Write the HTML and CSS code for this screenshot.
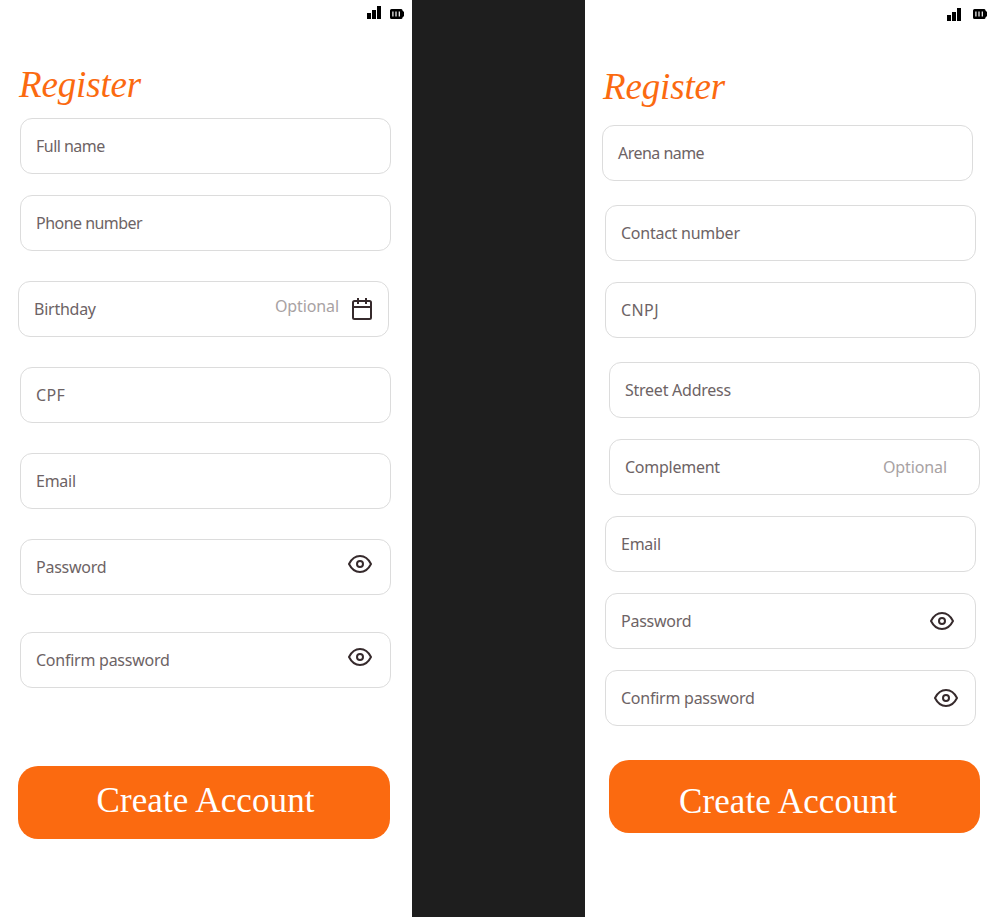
FILE: index.html
```html
<!DOCTYPE html>
<html lang="en">
<head>
<meta charset="utf-8">
<title>Register</title>
<link rel="stylesheet" href="styles.css">
</head>
<body>
<svg class="sprite" aria-hidden="true">
  <symbol id="signal" viewBox="0 0 14 13"><path d="M0 7h4v6H0zM5 4h4v9H5zM10 0h4v13h-4z"/></symbol>
  <symbol id="battery" viewBox="0 0 14 10"><path fill-rule="evenodd" d="M1.500 0h9.700Q12.500 0 12.500 1.500L14 3v4l-1.500 1.500Q12.500 10 11 10H1.500Q0 10 0 8.500v-7Q0 0 1.500 0zM2.300 2.500v5h1.200v-5zM5.400 2.500v5h1.200v-5zM8.700 2.500v5h1.200v-5z"/></symbol>
  <symbol id="eye" viewBox="0 0 24 20"><g fill="none" stroke="#362A2C" stroke-width="2" stroke-linejoin="round"><path d="M1 10C3.500 5 7.500 2 12 2s8.500 3 11 8c-2.500 5-6.500 8-11 8S3.500 15 1 10z"/><circle cx="12" cy="10" r="3"/></g></symbol>
  <symbol id="calendar" viewBox="0 0 22 24"><g fill="none" stroke="#362A2C" stroke-width="2"><rect x="2" y="4" width="18" height="18" rx="1.500"/><path d="M2 10h18M7 1v6M15 1v6"/></g></symbol>
</svg>
<main class="board">
  <section class="screen player">
    <div class="status"><svg class="signal"><use href="#signal"/></svg><svg class="battery"><use href="#battery"/></svg></div>
    <h1>Register</h1>
    <form>
      <div class="field name"><label>Full name</label></div>
      <div class="field phone"><label>Phone number</label></div>
      <div class="field birthday"><label>Birthday</label><span class="optional">Optional</span><svg class="calendar"><use href="#calendar"/></svg></div>
      <div class="field spaced code"><label>CPF</label></div>
      <div class="field spaced"><label>Email</label></div>
      <div class="field spaced"><label>Password</label><svg class="eye"><use href="#eye"/></svg></div>
      <div class="field confirm"><label>Confirm password</label><svg class="eye"><use href="#eye"/></svg></div>
      <button type="button">Create Account</button>
    </form>
  </section>
  <section class="screen arena">
    <div class="status"><svg class="signal"><use href="#signal"/></svg><svg class="battery"><use href="#battery"/></svg></div>
    <h1>Register</h1>
    <form>
      <div class="field name arena-name"><label>Arena name</label></div>
      <div class="field contact"><label>Contact number</label></div>
      <div class="field code"><label>CNPJ</label></div>
      <div class="field street"><label>Street Address</label></div>
      <div class="field complement"><label>Complement</label><span class="optional">Optional</span></div>
      <div class="field"><label>Email</label></div>
      <div class="field"><label>Password</label><svg class="eye"><use href="#eye"/></svg></div>
      <div class="field confirm"><label>Confirm password</label><svg class="eye"><use href="#eye"/></svg></div>
      <button type="button">Create Account</button>
    </form>
  </section>
</main>
</body>
</html>
```
FILE: styles.css
```css
* { box-sizing: border-box; }
body { margin: 0; background: #1e1e1e; font-family: "Noto Sans", sans-serif; }
.sprite { display: none; }
svg { display: block; flex: none; }
.board { display: flex; justify-content: space-between; width: 997px; height: 917px; overflow: hidden; }
.screen { width: 412px; height: 917px; background: #fff; }

.status { display: flex; justify-content: flex-end; align-items: center; gap: 9px; height: 26px; padding-right: 8px; }
.signal { width: 14px; height: 13px; margin-bottom: 1px; }
.battery { width: 14px; height: 10px; margin-top: 2px; }
.arena .status { height: 28px; gap: 12px; padding-right: 10px; }
.arena .signal { margin-bottom: 0; }
.arena .battery { margin-top: 0; }

h1 { margin: 37px 0 0 19px; height: 55px; font: italic 400 37px/44px "Liberation Serif", serif; letter-spacing: -0.15px; color: #fb6a10; }
.arena h1 { margin-left: 18px; height: 60px; }

form { display: flex; flex-direction: column; }
.field { display: flex; align-items: center; width: 371px; height: 56px; margin-left: 20px; padding: 0 15px; border: 1px solid #dcdcdc; border-radius: 12px; }
label { font-size: 16px; line-height: 24px; letter-spacing: -0.25px; color: #6d6365; }
.name label, .phone label { letter-spacing: -0.53px; }
.code label { letter-spacing: 0.4px; }
.optional { font-size: 16px; line-height: 24px; letter-spacing: -0.1px; margin-left: auto; color: #a8a2a3; }
.eye { width: 24px; height: 20px; margin: 0 3px 7px auto; }
.calendar { width: 22px; height: 24px; margin-left: 12px; }

.player .phone { margin-top: 21px; }
.player .birthday { margin: 30px 0 0 18px; }
.birthday .optional { margin-bottom: 6px; }
.player .spaced { margin-top: 30px; }
.player .confirm { margin-top: 37px; }

.arena .field + .field { margin-top: 21px; }
.arena .field { margin-left: 20px; }
.arena .arena-name { margin-left: 17px; }
.arena .field.contact.contact { margin-top: 24px; }
.arena .field.street.street { margin-top: 24px; margin-left: 24px; }
.arena .complement { margin-left: 24px; }
.arena .complement .optional { margin-right: 17px; }
.arena .eye { margin: 0 6px 1px auto; }
.arena .confirm .eye { margin-right: 2px; }

button { width: 372px; height: 73px; margin: 78px 0 0 18px; padding: 0 0 4px 3px; border: 0; border-radius: 20px; background: #fb6a10; color: #fff; font: 35px/40px "Liberation Serif", serif; letter-spacing: 0.1px; }
.arena button { width: 371px; margin: 34px 0 0 24px; padding: 10px 13px 0 0; }
```
